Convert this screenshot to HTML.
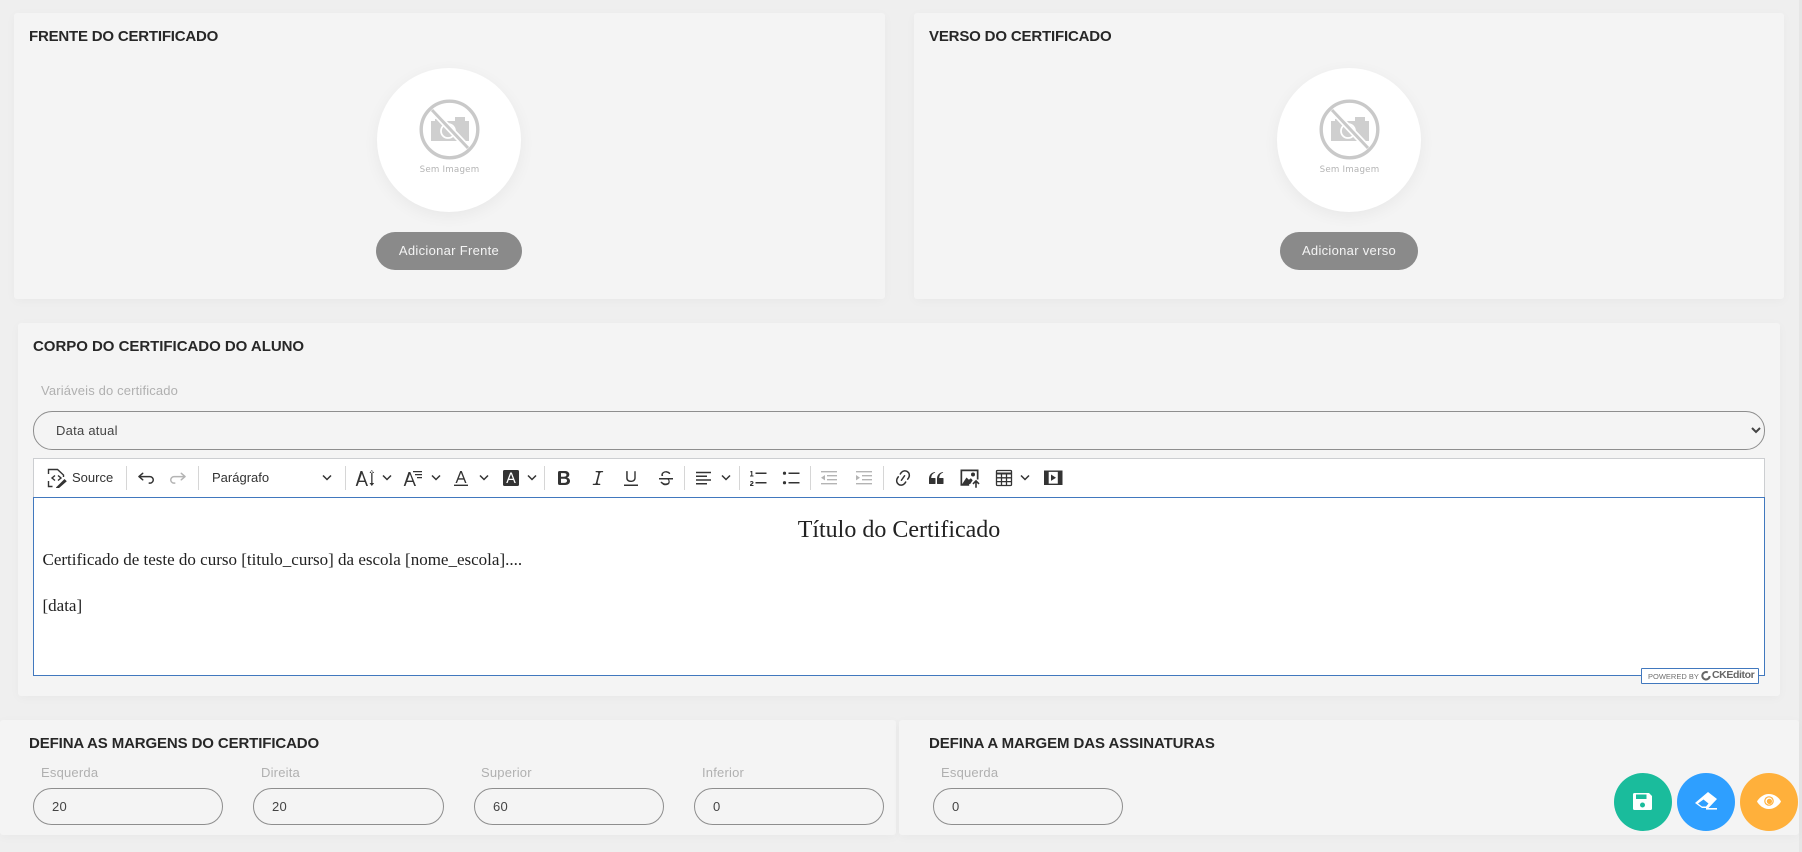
<!DOCTYPE html>
<html lang="pt"><head><meta charset="utf-8"><title>Certificado</title>
<style>
html,body{margin:0;padding:0;width:1802px;height:852px;overflow:hidden;background:#efefef}
body{position:relative;font-family:"Liberation Sans",sans-serif;color:#2a2a2a}
.a{position:absolute;box-sizing:border-box}
.card{background:#f4f4f4;box-shadow:0 2px 10px rgba(0,0,0,.03);border-radius:3px}
.t{position:absolute;font-weight:700;font-size:15px;line-height:18px;white-space:nowrap;color:#272727}
.l{position:absolute;font-size:13px;line-height:16px;color:#b0b0b0;white-space:nowrap;letter-spacing:.2px}
.circle{position:absolute;width:144px;height:144px;top:68px;border-radius:50%;background:#fff;box-shadow:0 4px 16px rgba(0,0,0,.05)}
.btn{position:absolute;top:232px;height:38px;border-radius:19px;background:#8a8a8a;color:#f4f4f4;font-size:13px;line-height:38px;text-align:center;letter-spacing:.3px}
.inp{position:absolute;top:788px;height:37px;width:190px;border:1px solid #8e8e8e;border-radius:18.5px;font-size:13px;line-height:36px;padding-left:18px;box-sizing:border-box;color:#444;letter-spacing:.3px}
.sep{position:absolute;top:466px;height:24px;width:1px;background:#d6d6d6}
.fab{position:absolute;top:773px;width:58px;height:58px;border-radius:50%}
.fab svg{position:absolute;left:15px;top:15px}
.ic{position:absolute;top:468px}
.ch{position:absolute;top:474px}
svg{display:block}
</style></head><body>

<div class="a" style="left:1799px;top:0;width:3px;height:852px;background:#e6e6e6"></div>

<div class="a card" style="left:14px;top:13px;width:871px;height:286px"></div>
<div class="t" style="left:29px;top:28px;letter-spacing:-.2px">FRENTE DO CERTIFICADO</div>
<div class="circle" style="left:377px"></div>
<svg class="a" style="left:415px;top:96px" width="70" height="84" viewBox="0 0 70 84">
<g style="filter:blur(.35px)">
<circle cx="34.5" cy="33.5" r="28.3" fill="none" stroke="#c9c9c9" stroke-width="3.4"/>
<path fill="#cfcfcf" d="M16 25h4v-2h5v2h15v-4h10v4h4v20H16z"/>
<circle cx="33" cy="35" r="7" fill="none" stroke="#fff" stroke-width="1.8"/>
<path d="M17 14l36 38" stroke="#fff" stroke-width="6.5"/><path d="M17 14l36 38" stroke="#c9c9c9" stroke-width="3"/>
</g>
<text x="34.5" y="76" text-anchor="middle" font-family="DejaVu Sans" font-size="8.7" letter-spacing=".2" fill="#b4b4b4">Sem Imagem</text>
</svg>
<div class="btn" style="left:376px;width:146px">Adicionar Frente</div>

<div class="a card" style="left:914px;top:13px;width:870px;height:286px"></div>
<div class="t" style="left:929px;top:28px;letter-spacing:-.17px">VERSO DO CERTIFICADO</div>
<div class="circle" style="left:1277px"></div>
<svg class="a" style="left:1315px;top:96px" width="70" height="84" viewBox="0 0 70 84">
<g style="filter:blur(.35px)">
<circle cx="34.5" cy="33.5" r="28.3" fill="none" stroke="#c9c9c9" stroke-width="3.4"/>
<path fill="#cfcfcf" d="M16 25h4v-2h5v2h15v-4h10v4h4v20H16z"/>
<circle cx="33" cy="35" r="7" fill="none" stroke="#fff" stroke-width="1.8"/>
<path d="M17 14l36 38" stroke="#fff" stroke-width="6.5"/><path d="M17 14l36 38" stroke="#c9c9c9" stroke-width="3"/>
</g>
<text x="34.5" y="76" text-anchor="middle" font-family="DejaVu Sans" font-size="8.7" letter-spacing=".2" fill="#b4b4b4">Sem Imagem</text>
</svg>
<div class="btn" style="left:1280px;width:138px">Adicionar verso</div>

<div class="a card" style="left:18px;top:323px;width:1762px;height:373px"></div>
<div class="t" style="left:33px;top:338px;letter-spacing:-.03px">CORPO DO CERTIFICADO DO ALUNO</div>
<div class="l" style="left:41px;top:383px;letter-spacing:.15px">Variáveis do certificado</div>
<select class="a" style="left:33px;top:411px;width:1732px;height:39px;border:1px solid #8e8e8e;border-radius:19px;background:#f4f4f4;padding:0 18px;font:13px 'Liberation Sans',sans-serif;color:#444;letter-spacing:.25px"><option>Data atual</option></select>

<div class="a" style="left:33px;top:458px;width:1732px;height:40px;background:#fff;border:1px solid #ccced1;border-bottom:0"></div>
<div class="a" style="left:33px;top:497px;width:1732px;height:179px;background:#fff;border:1px solid #4178be"></div>

<svg class="ic" style="left:47px" width="20" height="20" viewBox="0 0 20 20" fill="none" stroke="#333" stroke-width="1.4"><path d="M1.5 6V1.5h9l6 5.5v2M1.5 13v5.5h4M8 7.5L5 10l3 2.5M11 7.5l3 2.5-3 2.5"/><path d="M9 19.5l8.5-8.5 2.3 2.2-8.3 7.3H9z" fill="#333" stroke="none"/></svg>
<div class="a" style="left:72px;top:469px;font-size:13px;line-height:18px;color:#333">Source</div>
<div class="sep" style="left:126px"></div>
<svg class="ic" style="left:136px" width="20" height="20" viewBox="0 0 20 20" fill="#333"><path d="m5.042 9.367 2.189 1.837a.75.75 0 0 1-.965 1.149l-3.788-3.18a.747.747 0 0 1-.21-.284.75.75 0 0 1 .17-.945L6.23 4.762a.75.75 0 1 1 .964 1.15L4.863 7.866h8.917A.75.75 0 0 1 14 7.9a4 4 0 1 1-1.477 7.718l.344-1.489a2.5 2.5 0 1 0 1.094-4.73l.008-.032H5.042z"/></svg>
<svg class="ic" style="left:168px" width="20" height="20" viewBox="0 0 20 20" fill="#b4b4b4"><path d="m14.958 9.367-2.189 1.837a.75.75 0 0 0 .965 1.149l3.788-3.18a.747.747 0 0 0 .21-.284.75.75 0 0 0-.17-.945L13.77 4.762a.75.75 0 1 0-.964 1.15l2.331 1.955H6.22A.75.75 0 0 0 6 7.9a4 4 0 1 0 1.477 7.718l-.344-1.489A2.5 2.5 0 1 1 6.039 9.4l-.008-.032h8.927z"/></svg>
<div class="sep" style="left:198px"></div>
<div class="a" style="left:212px;top:469px;font-size:13px;line-height:18px;color:#333">Parágrafo</div>
<svg class="ch" style="left:322px" width="10" height="8" viewBox="0 0 10 8" fill="none" stroke="#333" stroke-width="1.5"><path d="M1 1.5l4 4 4-4"/></svg>
<div class="sep" style="left:345px"></div>

<svg class="ic" style="left:354px" width="22" height="20" viewBox="0 0 22 20" fill="#333"><path d="M6.5 3h1.8L14 18h-1.7l-1.5-4H4.9l-1.5 4H1.7zM5.4 12.6h4.9L7.9 5.6z"/><path d="M17.2 3v14h1.3V3zM15.5 5l2.3-3 2.4 3zM15.5 15l2.3 3 2.4-3z"/></svg>
<svg class="ch" style="left:382px" width="10" height="8" viewBox="0 0 10 8" fill="none" stroke="#333" stroke-width="1.5"><path d="M1 1.5l4 4 4-4"/></svg>
<svg class="ic" style="left:402px" width="22" height="20" viewBox="0 0 22 20" fill="#333"><path d="M6.5 4h1.8L14 18h-1.7l-1.5-4H4.9l-1.5 4H1.7zM5.4 12.6h4.9L7.9 6z"/><path d="M11 3h9v1.2h-9zM13 6h7v1.2h-7zM15 9h5v1.2h-5z"/></svg>
<svg class="ch" style="left:431px" width="10" height="8" viewBox="0 0 10 8" fill="none" stroke="#333" stroke-width="1.5"><path d="M1 1.5l4 4 4-4"/></svg>
<svg class="ic" style="left:451px" width="20" height="20" viewBox="0 0 20 20" fill="#333"><path d="M9.2 3h1.6L15.5 15H14l-1.3-3.4H7.3L6 15H4.5zM7.8 10.3h4.4L10 4.8z"/><path d="M3 16.6h14V18H3z"/></svg>
<svg class="ch" style="left:479px" width="10" height="8" viewBox="0 0 10 8" fill="none" stroke="#333" stroke-width="1.5"><path d="M1 1.5l4 4 4-4"/></svg>
<svg class="ic" style="left:501px" width="20" height="20" viewBox="0 0 20 20"><rect x="2" y="2" width="16" height="16" rx="1.5" fill="#333"/><path fill="#fff" d="M9.2 4.5h1.6L14.8 15h-1.4l-1.1-3H7.7l-1.1 3H5.2zM8.2 10.8h3.6L10 6z"/></svg>
<svg class="ch" style="left:527px" width="10" height="8" viewBox="0 0 10 8" fill="none" stroke="#333" stroke-width="1.5"><path d="M1 1.5l4 4 4-4"/></svg>
<div class="sep" style="left:544px"></div>

<svg class="ic" style="left:554px" width="20" height="20" viewBox="0 0 20 20" fill="#333"><path d="M10.187 17H5.773c-.637 0-1.092-.138-1.364-.415-.273-.277-.409-.718-.409-1.323V4.738c0-.617.14-1.062.419-1.332.279-.27.73-.406 1.354-.406h4.68c.69 0 1.288.041 1.793.124.506.083.96.242 1.36.478.341.197.644.447.906.75a3.262 3.262 0 0 1 .808 2.162c0 1.401-.722 2.426-2.167 3.075C15.05 10.175 16 11.315 16 13.01a3.756 3.756 0 0 1-2.296 3.504 6.1 6.1 0 0 1-1.517.377c-.571.073-1.238.11-2 .11zm-.217-6.217H7v4.087h3.069c1.977 0 2.965-.69 2.965-2.072 0-.707-.256-1.22-.768-1.537-.512-.319-1.277-.478-2.296-.478zM7 5.13v3.619h2.606c.729 0 1.292-.067 1.69-.2a1.6 1.6 0 0 0 .91-.765c.165-.267.247-.566.247-.897 0-.707-.26-1.176-.778-1.409-.519-.232-1.31-.348-2.375-.348H7z"/></svg>
<svg class="ic" style="left:588px" width="20" height="20" viewBox="0 0 20 20" fill="#333"><path d="M9.586 14.633l.021.004c-.036.335.095.655.393.962.082.083.173.15.274.201h1.474a.6.6 0 1 1 0 1.2H5.304a.6.6 0 0 1 0-1.2h1.15c.474-.07.809-.182 1.005-.334.157-.122.291-.32.404-.597l2.416-9.55a1.053 1.053 0 0 0-.281-.823 1.12 1.12 0 0 0-.442-.296H8.15a.6.6 0 0 1 0-1.2h6.443a.6.6 0 1 1 0 1.2h-1.195c-.376.056-.65.155-.823.296-.215.175-.423.439-.623.79l-2.366 9.347z"/></svg>
<svg class="ic" style="left:621px" width="20" height="20" viewBox="0 0 20 20" fill="#333"><path d="M3 18v-1.5h14V18zM5.2 10V3.6c0-.4.4-.6.8-.6.3 0 .7.2.7.6v6.2c0 2 1.3 2.8 3.2 2.8 1.9 0 3.4-.9 3.4-2.9V3.6c0-.3.4-.5.8-.5.3 0 .6.2.6.5V10c0 2.7-2.2 4-4.9 4-2.6 0-4.6-1.3-4.6-4z"/></svg>
<svg class="ic" style="left:656px" width="20" height="20" viewBox="0 0 20 20" fill="#333"><path d="M7 16.4c-.8-.4-1.5-.9-2.2-1.5a.6.6 0 0 1-.2-.5l.3-.6h1c1 1.2 2.1 1.7 3.7 1.7 1 0 1.8-.3 2.3-.6.6-.4.6-1.2.6-1.3.2-1.2-.9-2.1-.9-2.1h1.4c.3.7.9 1.3.7 2.4 0 .7-.1 1.5-1 2.3-.9.7-2.2 1.1-3.6 1.1-1 0-2-.3-2.8-.9zM3 10h14v1.5H3zm2.5-2c-.1-.3-.3-.9-.1-1.7.2-.9.6-1.6 1.5-2.2.9-.6 2-1 3.2-1 .9 0 1.7.3 2.6.7.5.3.9.6 1.3 1 .2.2.2.4.2.6 0 .2-.1.3-.2.5-.2.1-.4.2-.6.1-.2 0-.4-.1-.5-.2-.9-.8-1.9-1.3-3.1-1.3-1 0-1.7.3-2.2.7-.5.4-.7 1-.7 1.4-.1.7.2 1.2.4 1.4z"/></svg>
<div class="sep" style="left:684px"></div>

<svg class="ic" style="left:694px" width="20" height="20" viewBox="0 0 20 20" fill="#333"><path d="M2 3.75h15v1.5H2zM2 7.5h11v1.5H2zM2 11.25h15v1.5H2zM2 15h11v1.5H2z"/></svg>
<svg class="ch" style="left:721px" width="10" height="8" viewBox="0 0 10 8" fill="none" stroke="#333" stroke-width="1.5"><path d="M1 1.5l4 4 4-4"/></svg>
<div class="sep" style="left:739px"></div>

<svg class="ic" style="left:748px" width="20" height="20" viewBox="0 0 20 20" fill="#333"><path d="M7.5 4.5h11V6h-11zM7.5 14h11v1.5h-11z"/><path d="M3 3h1.3v4.5h1.2v1H2v-1h1.2V4.2H2.2V3.6zM2 14.2c.2-1.6 3.4-1.7 3.5.3 0 1.4-1.7 1.7-2 2.5h2v1H2v-1c.3-1.4 2.3-1.7 2.3-2.6 0-.6-1-.6-1.2 0z"/></svg>
<svg class="ic" style="left:781px" width="20" height="20" viewBox="0 0 20 20" fill="#333"><path d="M7.5 4.5h11V6h-11zM7.5 14h11v1.5h-11z"/><circle cx="3.5" cy="5.2" r="1.6"/><circle cx="3.5" cy="14.7" r="1.6"/></svg>
<div class="sep" style="left:810px"></div>

<svg class="ic" style="left:819px" width="20" height="20" viewBox="0 0 20 20" fill="#b4b4b4"><path d="M2 3h16v1.4H2zM8 7h10v1.4H8zM8 11h10v1.4H8zM2 15h16v1.4H2zM6 7v5.4L2 9.7z"/></svg>
<svg class="ic" style="left:854px" width="20" height="20" viewBox="0 0 20 20" fill="#b4b4b4"><path d="M2 3h16v1.4H2zM8 7h10v1.4H8zM8 11h10v1.4H8zM2 15h16v1.4H2zM2 7v5.4l4-2.7z"/></svg>
<div class="sep" style="left:883px"></div>

<svg class="ic" style="left:893px" width="20" height="20" viewBox="0 0 20 20" fill="#333"><path d="m11.077 15 .991-1.416a.75.75 0 1 1 1.229.86l-1.148 1.64a.748.748 0 0 1-.217.206 5.251 5.251 0 0 1-8.503-5.955.741.741 0 0 1 .12-.274l1.147-1.639a.75.75 0 1 1 1.228.86L4.933 10.7l.006.003a3.75 3.75 0 0 0 6.132 4.294l.006.004zm5.494-5.335a.748.748 0 0 1-.12.274l-1.147 1.639a.75.75 0 1 1-1.228-.86l.86-1.23a3.75 3.75 0 0 0-6.144-4.301l-.86 1.229a.75.75 0 0 1-1.229-.86l1.148-1.64a.748.748 0 0 1 .217-.206 5.251 5.251 0 0 1 8.503 5.955zm-4.563-2.532a.75.75 0 0 1 .184 1.045l-3.155 4.505a.75.75 0 1 1-1.229-.86l3.155-4.506a.75.75 0 0 1 1.045-.184z"/></svg>
<svg class="ic" style="left:926px" width="20" height="20" viewBox="0 0 20 20" fill="#333"><path d="M3 10.423a6.5 6.5 0 0 1 6.056-6.408l.038.67C6.448 5.423 5.354 7.663 5.22 10H9c.552 0 .5.432.5.986v4.511c0 .554-.448.503-1 .503h-5c-.552 0-.5-.449-.5-1.003v-4.574zm8 0a6.5 6.5 0 0 1 6.056-6.408l.038.67c-2.646.739-3.74 2.979-3.873 5.315H17c.552 0 .5.432.5.986v4.511c0 .554-.448.503-1 .503h-5c-.552 0-.5-.449-.5-1.003v-4.574z"/></svg>
<svg class="ic" style="left:960px" width="20" height="20" viewBox="0 0 20 20" fill="#333"><path d="M0.5 1.5h18v10h-1.7V3.2H2.2V16h7v1.7H0.5z"/><path d="M2.2 16l4.3-6.5 2.4 2.2 2-1.5 1.8 2-2.5 3.8z"/><circle cx="13" cy="6.5" r="2"/><path d="M15.2 19.8v-6.3h1.6v6.3zM12.4 15.4l3.6-3.6 3.6 3.6-1.1 1.1-2.5-2.5-2.5 2.5z"/></svg>
<svg class="ic" style="left:994px" width="20" height="20" viewBox="0 0 20 20" fill="none" stroke="#333" stroke-width="1.3"><rect x="2.5" y="2.5" width="15" height="15" rx="1"/><path d="M2.5 5.5h15" stroke-width="2"/><path d="M2.5 9.8h15M2.5 13.6h15M7.5 6v11M12.5 6v11"/></svg>
<svg class="ch" style="left:1020px" width="10" height="8" viewBox="0 0 10 8" fill="none" stroke="#333" stroke-width="1.5"><path d="M1 1.5l4 4 4-4"/></svg>
<svg class="ic" style="left:1043px" width="20" height="20" viewBox="0 0 20 20" fill="#333"><path fill-rule="evenodd" d="M1 2.5h18.5v14.5H1zM5.700 3.900v11.700h9.100V3.900zM8 6.500l5 3.200-5 3.200z"/></svg>

<div class="a" style="left:33px;top:516px;width:1732px;text-align:center;font:24px/28px 'Liberation Serif',serif;color:#222">Título do Certificado</div>
<div class="a" style="left:42.5px;top:549px;font:17px/22px 'Liberation Serif',serif;color:#222;white-space:nowrap">Certificado de teste do curso [titulo_curso] da escola [nome_escola]....</div>
<div class="a" style="left:42.5px;top:595px;font:17px/22px 'Liberation Serif',serif;color:#222">[data]</div>

<div class="a" style="left:1641px;top:668px;width:118px;height:16px;background:#fff;border:1px solid #4178be;border-radius:1px"></div>
<div class="a" style="left:1648px;top:671px;font-size:7.5px;line-height:11px;color:#707070;white-space:nowrap">POWERED BY</div>
<svg class="a" style="left:1701px;top:671px" width="10" height="10" viewBox="0 0 10 10" fill="none" stroke="#666" stroke-width="2"><path d="M6.8 1.5A3.7 3.7 0 1 0 8.700 5"/></svg>
<div class="a" style="left:1712px;top:669px;font-size:10.5px;font-weight:700;line-height:12px;color:#666;white-space:nowrap;letter-spacing:-.4px">CKEditor</div>

<div class="a card" style="left:0;top:720px;width:896px;height:115px"></div>
<div class="a card" style="left:899px;top:720px;width:900px;height:115px"></div>
<div class="t" style="left:29px;top:735px;letter-spacing:-.12px">DEFINA AS MARGENS DO CERTIFICADO</div>
<div class="t" style="left:929px;top:735px;letter-spacing:-.08px">DEFINA A MARGEM DAS ASSINATURAS</div>
<div class="l" style="left:41px;top:765px">Esquerda</div>
<div class="l" style="left:261px;top:765px">Direita</div>
<div class="l" style="left:481px;top:765px">Superior</div>
<div class="l" style="left:702px;top:765px">Inferior</div>
<div class="l" style="left:941px;top:765px">Esquerda</div>
<div class="inp" style="left:33px">20</div>
<div class="inp" style="left:253px;width:191px">20</div>
<div class="inp" style="left:474px">60</div>
<div class="inp" style="left:694px">0</div>
<div class="inp" style="left:933px">0</div>

<div class="fab" style="left:1614px;background:#1abc9c"><svg width="28" height="28" viewBox="0 0 28 28"><path fill="#fff" d="M5.500 5H20l3 3v12.500a1.500 1.500 0 0 1-1.500 1.500h-16A1.500 1.500 0 0 1 4 20.500v-14A1.500 1.500 0 0 1 5.500 5z"/><rect x="7" y="6.500" width="10.500" height="4.500" fill="#1abc9c"/><circle cx="13.500" cy="17" r="2.500" fill="#1abc9c"/></svg></div>
<div class="fab" style="left:1677px;background:#2e9fff"><svg width="28" height="28" viewBox="0 0 28 28" fill="#fff"><path fill-rule="evenodd" d="M16 4l9 7-8.500 9H10L3 15zM6 15.500l5.500-4 5 4L14 18.500h-4z"/><path d="M14 20h11v1.600H14z"/></svg></div>
<div class="fab" style="left:1740px;background:#ffb03b"><svg width="28" height="28" viewBox="0 0 28 28"><path fill="#fff" d="M14 6c6 0 10 4 12 7.500C24 17 20 21 14 21S4 17 2 13.500C4 10 8 6 14 6z"/><circle cx="14" cy="13" r="4.800" fill="#ffb03b"/><circle cx="14" cy="13" r="3.600" fill="#fff"/><circle cx="14.400" cy="13.400" r="2.600" fill="#ffb03b"/></svg></div>
</body></html>
